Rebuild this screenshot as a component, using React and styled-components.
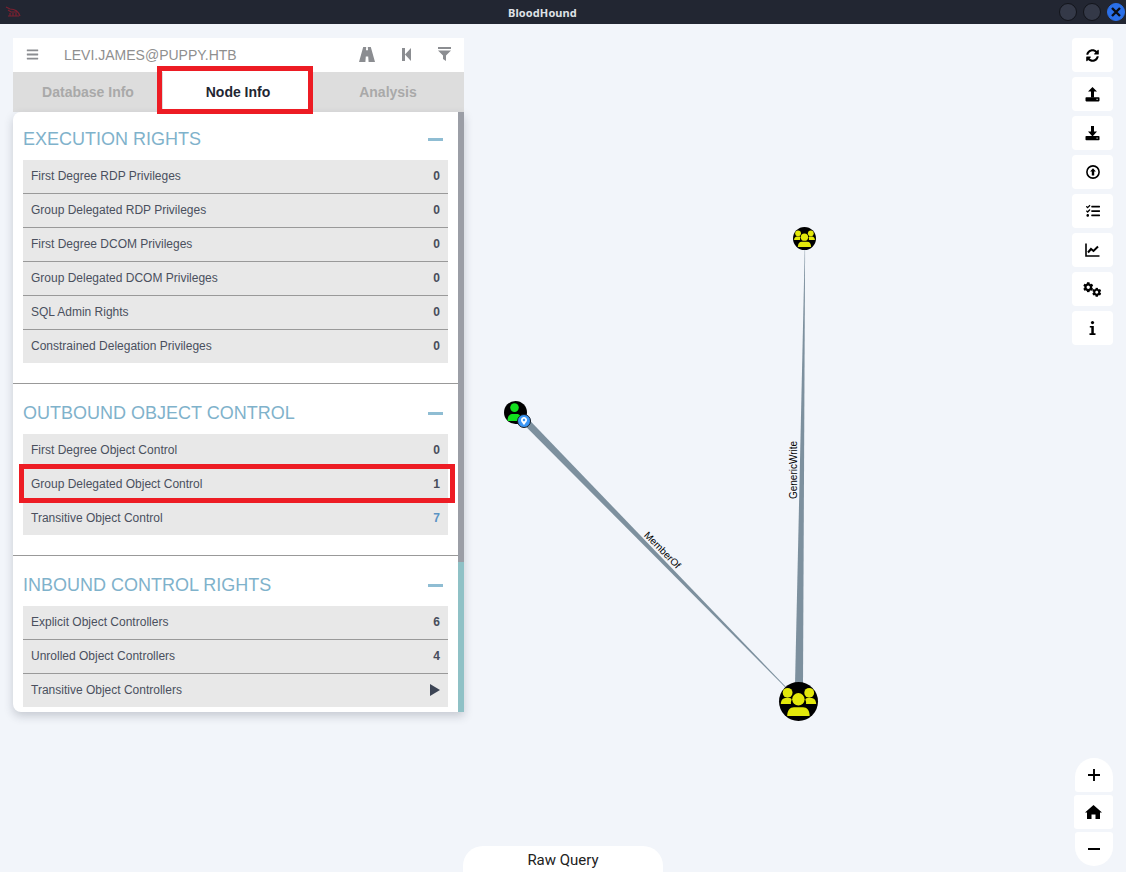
import React from "react";
import styled, { createGlobalStyle } from "styled-components";
import { FaBars, FaSyncAlt, FaTasks, FaCog, FaMapMarkerAlt } from "react-icons/fa";

const Global = createGlobalStyle`
  html, body { margin: 0; padding: 0; width: 1126px; height: 872px; overflow: hidden; background: #f2f5fa; }
  * { box-sizing: border-box; }
  body { font-family: "Liberation Sans", Arial, sans-serif; }
`;

const Page = styled.div`
  position: relative;
  width: 1126px;
  height: 872px;
  display: flex;
  flex-direction: column;
  background: #f2f5fa;
  overflow: hidden;
`;

const TitleBar = styled.header`
  height: 24px;
  flex: none;
  background: #222632;
  display: grid;
  grid-template-columns: 1fr auto 1fr;
  align-items: center;
  padding: 0 1px 0 5px;
`;
const AppTitle = styled.div`
  font: bold 11px "Noto Sans", sans-serif;
  color: #dfe1e6;
  letter-spacing: 0.1px;
  padding-right: 45px;
`;
const WindowButtons = styled.div`
  justify-self: end;
  display: flex;
  gap: 6px;
`;
const WindowButton = styled.div`
  width: 18px;
  height: 18px;
  border-radius: 50%;
  display: flex;
  align-items: center;
  justify-content: center;
  background: ${(p) => (p.$close ? "#2a6fe8" : "#343948")};
  border: 1px solid ${(p) => (p.$close ? "#2a6fe8" : "#12141b")};
  color: #0b0d14;
`;

const Workspace = styled.main`
  position: relative;
  flex: 1;
  padding: 14px 13px;
  display: flex;
  justify-content: space-between;
  align-items: flex-start;
`;

const Canvas = styled.div`
  position: absolute;
  inset: 0;
`;
const EdgeLayer = styled.svg`
  position: absolute;
  inset: 0;
  width: 100%;
  height: 100%;
`;
const EdgeLabel = styled.text`
  font: 10px "Liberation Sans", Arial, sans-serif;
  fill: #000;
  text-anchor: middle;
`;
const Node = styled.div`
  position: absolute;
  width: ${(p) => p.$size}px;
  height: ${(p) => p.$size}px;
  border-radius: 50%;
  background: #000;
`;
const NodeBadge = styled.div`
  position: absolute;
  right: -3.5px;
  bottom: -3.5px;
  width: 14px;
  height: 14px;
  border-radius: 50%;
  background: #3a96f5;
  border: 1.5px solid #14181f;
  color: #fff;
  display: flex;
  align-items: center;
  justify-content: center;
`;

const Panel = styled.section`
  position: relative;
  width: 451px;
  display: flex;
  flex-direction: column;
`;
const SearchBar = styled.div`
  height: 34px;
  background: #fff;
  display: flex;
  align-items: center;
  color: #8b8d91;
  padding: 0 13px 2px 13px;
`;
const SearchText = styled.div`
  flex: 1;
  margin-left: 25px;
  padding-top: 2px;
  font-size: 14px;
  color: #8f8f8f;
`;
const SearchIcons = styled.div`
  display: flex;
  align-items: center;
  gap: 27px;
`;
const Tabs = styled.div`
  height: 40px;
  background: #dddddd;
  display: grid;
  grid-template-columns: 150px 150px 150px;
`;
const Tab = styled.div`
  display: flex;
  align-items: center;
  justify-content: center;
  font-weight: bold;
  font-size: 14px;
  background: ${(p) => (p.$active ? "#fff" : "transparent")};
  color: ${(p) => (p.$active ? "#222632" : "#a9a9a9")};
`;
const Content = styled.div`
  height: 600px;
  display: flex;
  background: #fff;
  border-radius: 8px 0 0 8px;
  box-shadow: 0 4px 10px rgba(40, 50, 70, 0.22);
  overflow: hidden;
`;
const Sections = styled.div`
  flex: 1;
  min-width: 0;
  margin-top: -2px;
`;
const ScrollTrack = styled.div`
  width: 6px;
  flex: none;
  background: #8fc1c6;
`;
const ScrollThumb = styled.div`
  height: 450px;
  background: #9b9ea6;
`;
const Section = styled.div`
  padding: 0 10px 20px;
  border-bottom: 1px solid #999;
  &:last-child { border-bottom: 0; }
`;
const SectionHead = styled.div`
  height: 50px;
  padding-top: 8px;
  display: flex;
  align-items: center;
  justify-content: space-between;
  font-size: 18px;
  color: #7fb2cb;
`;
const Collapse = styled.div`
  width: 15px;
  height: 3px;
  margin: 0 5px 0 0;
  background: #8fbdd3;
`;
const Row = styled.div`
  height: 34px;
  background: #e8e8e8;
  display: flex;
  align-items: center;
  justify-content: space-between;
  padding: 0 8px 2px;
  font-size: 12px;
  color: #4a505e;
  border-bottom: 1px solid #999;
  &:last-child { border-bottom: 0; height: 33px; padding-bottom: 1px; }
`;
const RowValue = styled.span`
  font-weight: bold;
  color: ${(p) => (p.$link ? "#5a93c4" : "#474d5b")};
`;
const PlayIcon = styled.svg`
  display: block;
  width: 10px;
  height: 12px;
  fill: #3c4454;
`;

const Annotation = styled.div`
  position: absolute;
  border: 5px solid #ed1c24;
  pointer-events: none;
`;

const ToolColumn = styled.div`
  position: relative;
  width: 41px;
  display: flex;
  flex-direction: column;
  gap: 5px;
`;
const ToolButton = styled.button`
  width: 41px;
  height: 34px;
  padding: 0;
  border: 0;
  border-radius: 4px;
  background: #fff;
  color: #000;
  display: flex;
  align-items: center;
  justify-content: center;
`;
const ZoomColumn = styled.div`
  position: absolute;
  right: 13px;
  bottom: 6px;
  width: 40px;
  display: flex;
  flex-direction: column;
  gap: 3px;
  align-items: flex-end;
`;
const ZoomButton = styled.button`
  width: ${(p) => (p.$pos === "mid" ? 39 : 38)}px;
  height: 34px;
  padding: 0;
  border: 0;
  background: #fff;
  color: #000;
  display: flex;
  align-items: center;
  justify-content: center;
  border-radius: ${(p) =>
    p.$pos === "top" ? "19px 19px 3px 3px" : p.$pos === "bottom" ? "3px 3px 19px 19px" : "3px"};
`;
const RawQuery = styled.div`
  position: absolute;
  left: 463px;
  bottom: 0;
  width: 200px;
  height: 26px;
  padding-top: 5px;
  background: #fff;
  border-radius: 20px 20px 0 0;
  text-align: center;
  font: 15px Roboto, sans-serif;
  color: #222;
`;

const Logo = () => (
  <svg width="16" height="12" viewBox="0 0 16 12" fill="none" stroke="#7c2030" strokeWidth="1.2">
    <path d="M1 1 L5 3 C8 3 13 4 15 10 M3 4 L6 6 H12 M5 10 V7 M8 10 V7 M11 10 V7 M3 10 H14" />
  </svg>
);

const CloseGlyph = () => (
  <svg width="10" height="10" viewBox="0 0 10 10" stroke="#0b0d14" strokeWidth="2.4">
    <path d="M1 1 L9 9 M9 1 L1 9" />
  </svg>
);

const RoadGlyph = () => (
  <svg width="16" height="15" viewBox="0 0 16 15" fill="currentColor">
    <polygon points="4.2,0 7.2,0 7,3.2 9,3.2 8.8,0 11.8,0 16,15 9.6,15 9.2,9.5 6.8,9.5 6.4,15 0,15" />
  </svg>
);

const StepBackGlyph = () => (
  <svg width="9" height="13" viewBox="0 0 9 13" fill="currentColor">
    <rect x="0" y="0" width="3" height="13" />
    <polygon points="9,0 9,13 3,6.5" />
  </svg>
);

const FilterGlyph = () => (
  <svg width="13" height="14" viewBox="0 0 13 14" fill="currentColor">
    <rect x="0" y="0" width="13" height="2" />
    <polygon points="0,3.5 13,3.5 8,8.5 8,14 5,12 5,8.5" />
  </svg>
);

const UsersGlyph = ({ size }) => (
  <svg width={size} height={size} viewBox="0 0 39 39" fill="#e3e80a" style={{ display: "block" }}>
    <circle cx="8.6" cy="10.8" r="4.9" />
    <circle cx="30.2" cy="10.8" r="4.9" />
    <circle cx="19.4" cy="17.3" r="6.2" />
    <path d="M1.8 22 C2 18 4 16 7 16 H10.5 C12.2 16 13 17 12.4 18.4 C11.8 19.6 11.8 21 12 22 Z" />
    <path d="M37.2 22 C37 18 35 16 32 16 H28.5 C26.8 16 26 17 26.6 18.4 C27.2 19.6 27.2 21 27 22 Z" />
    <path d="M8.2 34 C8.2 28 11 25.2 15 25.2 H24 C28 25.2 30.6 28 30.6 34 Z" />
  </svg>
);

const UserGlyph = () => (
  <svg width="23" height="23" viewBox="0 0 23 23" fill="#12e01e" style={{ display: "block" }}>
    <circle cx="10.5" cy="6.6" r="4.3" />
    <path d="M3.5 20 C3.5 15.5 5.5 13 8 13 H13 C15.5 13 17.5 15.5 17.5 20 Z" />
  </svg>
);

const UploadGlyph = () => (
  <svg width="15" height="15" viewBox="0 0 15 15" fill="#000">
    <polygon points="7.5,0 12,4.6 9,4.6 9,10.5 6,10.5 6,4.6 3,4.6" />
    <rect x="0.5" y="10.2" width="14" height="4.2" rx="0.8" />
    <rect x="11.5" y="11.8" width="1.2" height="1" fill="#fff" />
  </svg>
);

const DownloadGlyph = () => (
  <svg width="15" height="15" viewBox="0 0 15 15" fill="#000">
    <polygon points="6,0 9,0 9,5.6 12,5.6 7.5,10.4 3,5.6 6,5.6" />
    <rect x="0.5" y="10" width="14" height="4.2" rx="0.8" />
    <rect x="11.5" y="11.6" width="1.2" height="1" fill="#fff" />
  </svg>
);

const CircleUpGlyph = () => (
  <svg width="14" height="14" viewBox="0 0 14 14">
    <circle cx="7" cy="7" r="6.1" fill="none" stroke="#000" strokeWidth="1.6" />
    <polygon points="7,3.2 9.9,6.6 8.2,6.6 8.2,10.4 5.8,10.4 5.8,6.6 4.1,6.6" fill="#000" />
  </svg>
);

const ChartGlyph = () => (
  <svg width="15" height="14" viewBox="0 0 15 14" fill="none" stroke="#000">
    <path d="M1 0.5 V13 H14.5" strokeWidth="1.6" />
    <path d="M3 9.5 L6 6 L8.5 8 L13 3.5" strokeWidth="2" />
  </svg>
);

const CogsGlyph = () => (
  <svg width="19" height="15" viewBox="0 0 19 15" fill="#000">
    <FaCog size={10.5} x={0} y={0} />
    <FaCog size={9.5} x={9} y={5.5} />
  </svg>
);

const InfoGlyph = () => (
  <svg width="7" height="14" viewBox="0 0 7 14" fill="#000">
    <circle cx="3.5" cy="1.6" r="1.6" />
    <path d="M0.8 5 H4.8 V12.2 H6.5 V14 H0.5 V12.2 H2.3 V6.6 H0.8 Z" />
  </svg>
);

const PlusGlyph = () => (
  <svg width="12" height="12" viewBox="0 0 12 12" stroke="#000" strokeWidth="1.9">
    <path d="M6 0 V12 M0 6 H12" />
  </svg>
);

const MinusGlyph = () => (
  <svg width="12" height="2" viewBox="0 0 12 2" fill="#000">
    <rect width="12" height="2" />
  </svg>
);

const HomeGlyph = () => (
  <svg width="17" height="14" viewBox="0 0 17 14" fill="#000">
    <path d="M8.5 0 L17 7.6 H15 V14 H10.5 V9.5 H6.5 V14 H2 V7.6 H0 Z" />
  </svg>
);

const sections = [
  {
    title: "EXECUTION RIGHTS",
    rows: [
      ["First Degree RDP Privileges", "0"],
      ["Group Delegated RDP Privileges", "0"],
      ["First Degree DCOM Privileges", "0"],
      ["Group Delegated DCOM Privileges", "0"],
      ["SQL Admin Rights", "0"],
      ["Constrained Delegation Privileges", "0"],
    ],
  },
  {
    title: "OUTBOUND OBJECT CONTROL",
    rows: [
      ["First Degree Object Control", "0"],
      ["Group Delegated Object Control", "1"],
      ["Transitive Object Control", "7", true],
    ],
  },
  {
    title: "INBOUND CONTROL RIGHTS",
    rows: [
      ["Explicit Object Controllers", "6"],
      ["Unrolled Object Controllers", "4"],
      ["Transitive Object Controllers", "play"],
    ],
  },
];

const tools = [
  <FaSyncAlt size={13} />, <UploadGlyph />, <DownloadGlyph />,
  <CircleUpGlyph />, <FaTasks size={14} />, <ChartGlyph />,
  <CogsGlyph />, <InfoGlyph />,
];

export default function App() {
  return (
    <Page>
      <Global />
      <TitleBar>
        <Logo />
        <AppTitle>BloodHound</AppTitle>
        <WindowButtons>
          <WindowButton />
          <WindowButton />
          <WindowButton $close><CloseGlyph /></WindowButton>
        </WindowButtons>
      </TitleBar>
      <Workspace>
        <Canvas>
          <EdgeLayer viewBox="0 0 1126 848">
            <polygon points="520.8,397.5 526,392.4 787,664 786.4,664.6" fill="#7d909e" />
            <polygon points="804.7,226 805.1,226 803,661 795,661" fill="#7d909e" />
            <EdgeLabel transform="translate(660,528.5) rotate(45.5)">MemberOf</EdgeLabel>
            <EdgeLabel transform="translate(796.5,446) rotate(-90)">GenericWrite</EdgeLabel>
          </EdgeLayer>
          <Node $size={23} style={{ left: 793, top: 202.5 }}><UsersGlyph size={23} /></Node>
          <Node $size={39} style={{ left: 779, top: 658 }}><UsersGlyph size={39} /></Node>
          <Node $size={23} style={{ left: 504, top: 377 }}>
            <UserGlyph />
            <NodeBadge><FaMapMarkerAlt size={8} /></NodeBadge>
          </Node>
        </Canvas>
        <Panel>
          <SearchBar>
            <FaBars size={13} />
            <SearchText>LEVI.JAMES@PUPPY.HTB</SearchText>
            <SearchIcons>
              <RoadGlyph />
              <StepBackGlyph />
              <FilterGlyph />
            </SearchIcons>
          </SearchBar>
          <Tabs>
            <Tab>Database Info</Tab>
            <Tab $active>Node Info</Tab>
            <Tab>Analysis</Tab>
          </Tabs>
          <Content>
            <Sections>
              {sections.map((s) => (
                <Section key={s.title}>
                  <SectionHead>{s.title}<Collapse /></SectionHead>
                  {s.rows.map(([label, value, link]) => (
                    <Row key={label}>
                      {label}
                      <RowValue $link={link}>
                        {value === "play" ? (
                          <PlayIcon viewBox="0 0 10 12"><polygon points="0,0 10,6 0,12" /></PlayIcon>
                        ) : value}
                      </RowValue>
                    </Row>
                  ))}
                </Section>
              ))}
            </Sections>
            <ScrollTrack><ScrollThumb /></ScrollTrack>
          </Content>
          <Annotation style={{ left: 144, top: 28, width: 156, height: 48 }} />
          <Annotation style={{ left: 6, top: 426, width: 436, height: 39 }} />
        </Panel>
        <ToolColumn>
          {tools.map((icon, i) => <ToolButton key={i}>{icon}</ToolButton>)}
        </ToolColumn>
        <ZoomColumn>
          <ZoomButton $pos="top"><PlusGlyph /></ZoomButton>
          <ZoomButton $pos="mid"><HomeGlyph /></ZoomButton>
          <ZoomButton $pos="bottom"><MinusGlyph /></ZoomButton>
        </ZoomColumn>
        <RawQuery>Raw Query</RawQuery>
      </Workspace>
    </Page>
  );
}
